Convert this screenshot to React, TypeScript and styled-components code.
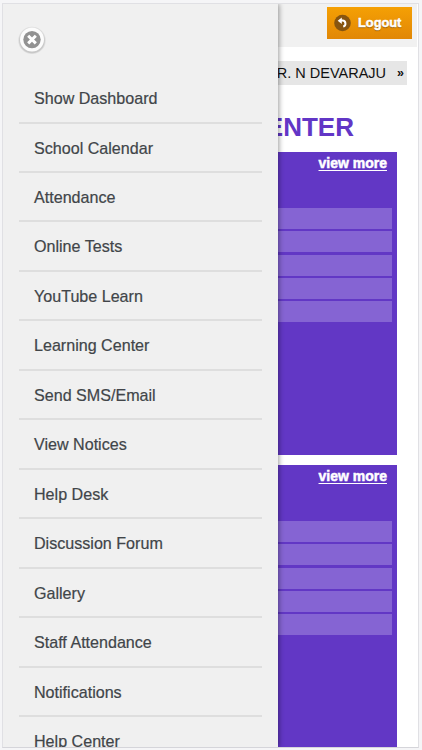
import React from 'react';
import styled, { createGlobalStyle } from 'styled-components';

const GlobalStyle = createGlobalStyle`
  *, *::before, *::after { box-sizing: border-box; }
  body {
    margin: 0;
    background: #f5f5f7;
    font-family: "Liberation Sans", Arial, sans-serif;
    overflow: hidden;
  }
`;

const Stage = styled.div`
  width: 422px;
  height: 750px;
  padding: 3px 3px 2px 2px;
  overflow: hidden;
`;

const Screen = styled.div`
  position: relative;
  height: 745px;
  border: 1px solid #e0e0e4;
  border-bottom-color: #d5d5da;
  background: #fff;
  overflow: hidden;
`;

const TopBar = styled.header`
  height: 43px;
  padding: 2.5px 5px 0 0;
  margin-right: 1px;
  display: flex;
  justify-content: flex-end;
  align-items: flex-start;
  background: #f1f1f1;
`;

const LogoutButton = styled.button`
  width: 85px;
  height: 32px;
  margin: 0;
  padding: 0 0 0 7px;
  display: flex;
  align-items: center;
  gap: 7px;
  border: 0;
  background: linear-gradient(#f5a004, #e18706);
  color: #fff;
  font: bold 12.8px "Liberation Sans", Arial, sans-serif;
  -webkit-text-stroke: 0.5px #fff;
  text-shadow: 0 1px 1px rgba(90, 50, 0, 0.7);
  white-space: nowrap;
`;

const Ticker = styled.div`
  height: 24px;
  margin: 14px 11px 0 0;
  padding-right: 3px;
  display: flex;
  justify-content: flex-end;
  align-items: center;
  background: #e6e6e6;
  color: #111;
  font-size: 14.5px;
  line-height: 24px;
  white-space: nowrap;
`;

const TickerArrow = styled.span`
  margin-left: 11px;
  font-size: 12.5px;
  font-weight: bold;
`;

const Title = styled.h1`
  height: 36px;
  margin: 24px 64px 7px 0;
  text-align: right;
  color: #6236c6;
  font-size: 26px;
  line-height: 36px;
  font-weight: bold;
`;

const Board = styled.section`
  height: 303px;
  margin: 0 21px 10px 12px;
  padding: 2px 5px 0;
  background: #6237c5;
`;

const ViewMore = styled.a`
  display: block;
  height: 20px;
  margin: 0 5px 34px 0;
  text-align: right;
  color: #fff;
  font-size: 14px;
  line-height: 19px;
  font-weight: bold;
  text-decoration: underline;
  text-decoration-thickness: 1px;
  text-underline-offset: 2px;
  -webkit-text-stroke: 0.5px #fff;
`;

const Slots = styled.div`
  display: grid;
  grid-template-rows: repeat(5, 21.2px);
  row-gap: 2.1px;
`;

const Slot = styled.div`
  background: #8564d3;
`;

const Drawer = styled.aside`
  position: absolute;
  top: 0;
  bottom: 0;
  left: 0;
  width: 275px;
  padding: 20px 16px 0;
  background: #f0f0f0;
  box-shadow: 1px 0 5px rgba(0, 0, 0, 0.4);
  overflow: hidden;
`;

const CloseButton = styled.button`
  display: block;
  width: 30px;
  height: 30px;
  margin: 1px 0 0 -2px;
  padding: 0;
  border: 0;
  background: none;
`;

const Menu = styled.ul`
  margin: 19.1px 0 0;
  padding: 0;
  list-style: none;
`;

const MenuItem = styled.li`
  height: 49.46px;
  padding: 0 0 0 15px;
  border-bottom: 2px solid #dedede;
  color: #414549;
  font-size: 16.1px;
  line-height: 48px;
  white-space: nowrap;
  -webkit-text-stroke: 0.2px #414549;
`;

const items = [
  'Show Dashboard',
  'School Calendar',
  'Attendance',
  'Online Tests',
  'YouTube Learn',
  'Learning Center',
  'Send SMS/Email',
  'View Notices',
  'Help Desk',
  'Discussion Forum',
  'Gallery',
  'Staff Attendance',
  'Notifications',
  'Help Center',
];

const BackIcon = () => (
  <svg width="17" height="18" viewBox="0 0 17 18" aria-hidden="true">
    <circle cx="8.5" cy="9" r="8.3" fill="#875510" />
    <path d="M7 6.6h1.6a3 3 0 0 1 .6 5.9" fill="none" stroke="#fff" strokeWidth="2" />
    <path d="M3.7 6.7 7.8 3.4v6.7z" fill="#fff" />
  </svg>
);

const CloseIcon = () => (
  <svg width="30" height="30" viewBox="0 0 30 30" aria-hidden="true">
    <circle cx="15" cy="15.4" r="13.7" fill="#dedede" />
    <circle cx="15" cy="15.5" r="12.8" fill="#c8c8c8" />
    <circle cx="15" cy="14.6" r="12" fill="#fcfcfc" />
    <circle cx="15" cy="14.6" r="8.7" fill="#929292" />
    <path d="m11.2 10.8 7.6 7.6m0-7.6-7.6 7.6" stroke="#fff" strokeWidth="3" />
  </svg>
);

const BoardPanel = () => (
  <Board>
    <ViewMore>view more</ViewMore>
    <Slots>
      {[0, 1, 2, 3, 4].map((n) => (
        <Slot key={n} />
      ))}
    </Slots>
  </Board>
);

export default function App() {
  return (
    <>
      <GlobalStyle />
      <Stage>
        <Screen>
          <TopBar>
            <LogoutButton>
              <BackIcon />
              Logout
            </LogoutButton>
          </TopBar>
          <Ticker>
            R. N DEVARAJU<TickerArrow>»</TickerArrow>
          </Ticker>
          <Title>CENTER</Title>
          <BoardPanel />
          <BoardPanel />
          <Drawer>
            <CloseButton aria-label="Close menu">
              <CloseIcon />
            </CloseButton>
            <Menu>
              {items.map((label) => (
                <MenuItem key={label}>{label}</MenuItem>
              ))}
            </Menu>
          </Drawer>
        </Screen>
      </Stage>
    </>
  );
}
